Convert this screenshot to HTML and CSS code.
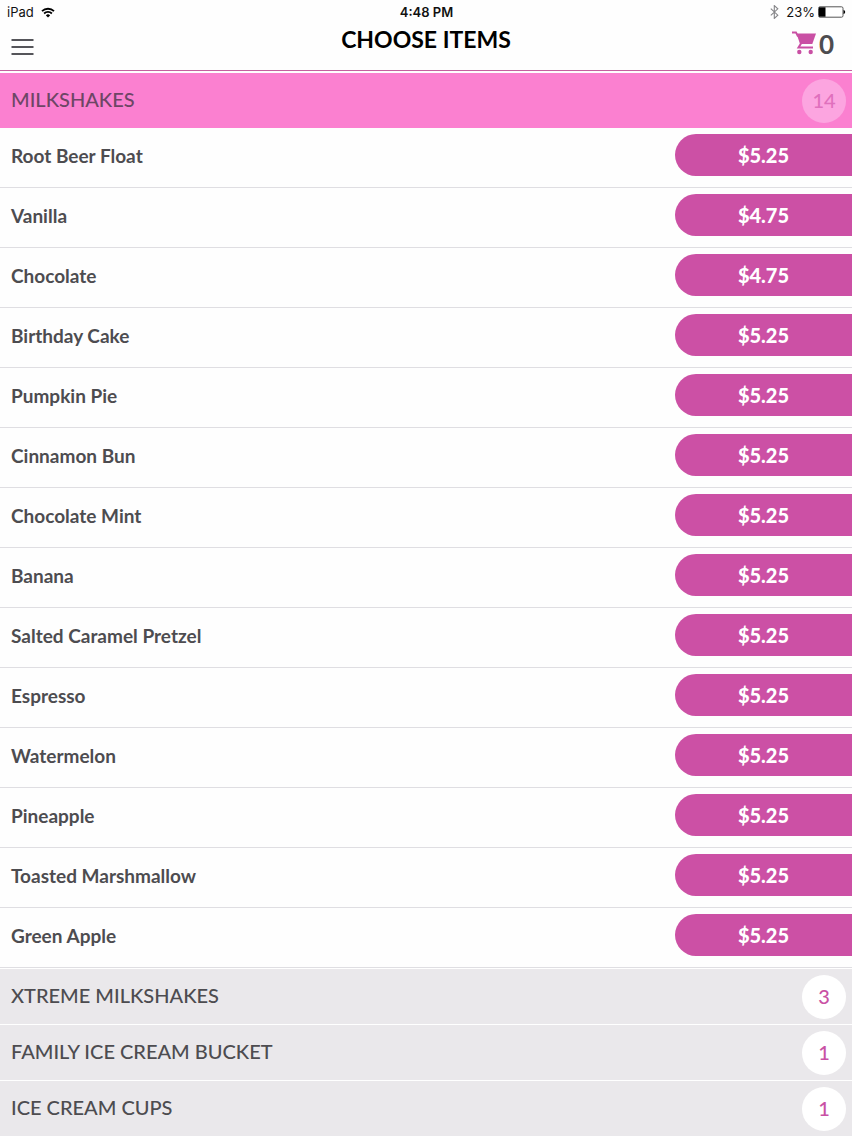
FILE: index.html
```html
<!DOCTYPE html>
<html lang="en">
<head>
    <meta charset="utf-8">
    <meta name="viewport" content="width=device-width, initial-scale=1">
    <title>Choose Items</title>
    <link rel="stylesheet" href="styles.css">
</head>
<body>

    <div class="status-bar">
        <div class="status-left">
            <span>iPad</span>
            <svg width="14" height="11" viewBox="0 0 14 11">
                <path d="M1 4.200a8.600 8.600 0 0 1 12 0M3.100 6.500a5.600 5.600 0 0 1 7.800 0" fill="none" stroke="#000" stroke-width="1.800"/>
                <path d="M4.900 8.400a3 3 0 0 1 4.200 0L7 10.600z"/>
            </svg>
        </div>
        <div class="status-time">4:48 PM</div>
        <div class="status-right">
            <svg width="9" height="14" viewBox="0 0 9 14">
                <path d="M.8 3.600l7 6.600-3.500 3.200V.6l3.500 3.200-7 6.600" fill="none" stroke="#858588" stroke-width="1.100"/>
            </svg>
            <span class="battery">
                <span>23%</span>
                <svg width="28" height="12" viewBox="0 0 28 12">
                    <rect x=".5" y=".8" width="24.500" height="10.400" rx="1.500" fill="#fff" stroke="#555"/>
                    <path d="M1 1.300h6.500v9.400H1z"/>
                    <path d="M25.500 4c2.200 .6 2.200 3.400 0 4z"/>
                </svg>
            </span>
        </div>
    </div>

    <header class="header">
        <button class="menu-button" type="button" aria-label="Menu">
            <svg width="23" height="16" viewBox="0 0 23 16">
                <path d="M.5 1h22M.5 8h22M.5 15h22" stroke="#55555a" stroke-width="2"/>
            </svg>
        </button>
        <h1 class="title">CHOOSE ITEMS</h1>
        <button class="cart-button" type="button" aria-label="Cart, 0 items">
            <svg width="25" height="24" viewBox="0 0 25 24" fill="#c950a4">
                <path d="M0 1.500h4l2 4" fill="none" stroke="#c950a4" stroke-width="1.800"/>
                <path d="M4.500 2.500h19.500L20.300 13H8z"/>
                <path d="M9 12.500l-2.500 4h14.500" fill="none" stroke="#c950a4" stroke-width="2"/>
                <circle cx="7.300" cy="21" r="2.200"/>
                <circle cx="18.700" cy="21" r="2.200"/>
            </svg>
            <span class="cart-total">0</span>
        </button>
    </header>

    <main>
        <button class="category category-open" type="button" aria-expanded="true">
            <span class="category-name">MILKSHAKES</span>
            <span class="count">14</span>
        </button>

        <ul class="items">
            <li class="item"><span>Root Beer Float</span><button class="price" type="button">$5.25</button></li>
            <li class="item"><span>Vanilla</span><button class="price" type="button">$4.75</button></li>
            <li class="item"><span>Chocolate</span><button class="price" type="button">$4.75</button></li>
            <li class="item"><span>Birthday Cake</span><button class="price" type="button">$5.25</button></li>
            <li class="item"><span>Pumpkin Pie</span><button class="price" type="button">$5.25</button></li>
            <li class="item"><span>Cinnamon Bun</span><button class="price" type="button">$5.25</button></li>
            <li class="item"><span>Chocolate Mint</span><button class="price" type="button">$5.25</button></li>
            <li class="item"><span>Banana</span><button class="price" type="button">$5.25</button></li>
            <li class="item"><span>Salted Caramel Pretzel</span><button class="price" type="button">$5.25</button></li>
            <li class="item"><span>Espresso</span><button class="price" type="button">$5.25</button></li>
            <li class="item"><span>Watermelon</span><button class="price" type="button">$5.25</button></li>
            <li class="item"><span>Pineapple</span><button class="price" type="button">$5.25</button></li>
            <li class="item"><span>Toasted Marshmallow</span><button class="price" type="button">$5.25</button></li>
            <li class="item"><span>Green Apple</span><button class="price" type="button">$5.25</button></li>
        </ul>

        <button class="category" type="button" aria-expanded="false">
            <span class="category-name">XTREME MILKSHAKES</span>
            <span class="count">3</span>
        </button>
        <button class="category" type="button" aria-expanded="false">
            <span class="category-name">FAMILY ICE CREAM BUCKET</span>
            <span class="count">1</span>
        </button>
        <button class="category" type="button" aria-expanded="false">
            <span class="category-name">ICE CREAM CUPS</span>
            <span class="count">1</span>
        </button>
    </main>

</body>
</html>
```

FILE: styles.css
```css
* {
    box-sizing: border-box;
}

body {
    margin: 0;
    background-color: #fefefe;
    color: #4d4c50;
    font-family: Lato, "Open Sans", sans-serif;
    font-size: 20px;
}

button {
    margin: 0;
    padding: 0;
    border: 0;
    background: none;
    color: inherit;
    font: inherit;
    cursor: pointer;
}

svg {
    display: block;
}

/* Status bar */
.status-bar {
    display: grid;
    grid-template-columns: 1fr auto 1fr;
    align-items: center;
    height: 24px;
    padding: 0 6px 0 7px;
    color: #111;
    font-family: Inter, sans-serif;
    font-size: 13px;
}

.status-left,
.status-right {
    display: flex;
    align-items: center;
    gap: 7px;
}

.status-right {
    justify-content: flex-end;
}

.status-time {
    font-weight: 600;
}

.battery {
    display: flex;
    align-items: center;
    gap: 3px;
}

/* Header */
.header {
    display: grid;
    grid-template-columns: 1fr auto 1fr;
    height: 47px;
    margin-bottom: 1px;
    padding: 0 11px;
    border-bottom: 1px solid #c4609f;
}

.title {
    margin: 0;
    color: #000;
    font-size: 23px;
    font-weight: bold;
    line-height: 30px;
}

.menu-button {
    justify-self: start;
    align-self: center;
}

.cart-button {
    display: flex;
    align-items: center;
    justify-self: end;
    gap: 2px;
    height: 38px;
    margin-right: 7px;
}

.cart-total {
    padding-top: 1px;
    font-size: 26px;
    font-weight: bold;
}

/* Category rows */
.category {
    display: flex;
    align-items: center;
    justify-content: space-between;
    width: 100%;
    height: 56px;
    padding: 0 6px 0 11px;
    border-top: 1px solid #fff;
    background-color: #eae8eb;
    line-height: 24px;
    text-align: left;
}

.category-name {
    padding-bottom: 4px;
    font-weight: 500;
}

.category-open {
    background-color: #fb80d0;
    color: #6d4665;
}

.count {
    width: 44px;
    height: 44px;
    border-radius: 50%;
    background-color: #fff;
    color: #c950a4;
    font-weight: 500;
    line-height: 42px;
    text-align: center;
}

.category-open .count {
    background-color: #fca5e0;
    color: #e070bd;
}

/* Items */
.items {
    margin: 0;
    padding: 0;
    list-style: none;
}

.item {
    display: flex;
    align-items: center;
    justify-content: space-between;
    height: 60px;
    padding-left: 11px;
    padding-bottom: 5px;
    border-bottom: 1px solid #dfdee2;
    font-size: 19px;
    font-weight: bold;
}

.price {
    width: 177px;
    height: 42px;
    border-radius: 21px 0 0 21px;
    background-color: #cc50a5;
    color: #fff;
    font-size: 20px;
    font-weight: 900;
}
```
